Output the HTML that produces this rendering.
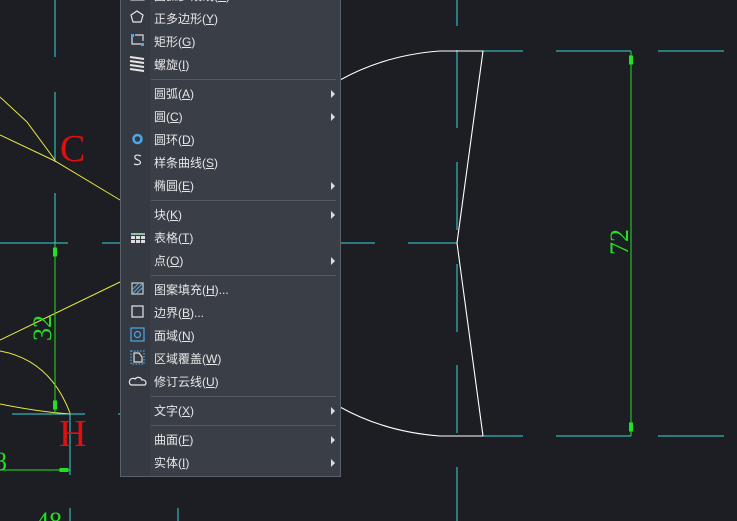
<!DOCTYPE html>
<html><head><meta charset="utf-8"><style>
body{margin:0;width:737px;height:521px;background:#1c1e23;overflow:hidden;position:relative;font-family:"Liberation Sans","Noto Sans CJK SC",sans-serif}
svg.bg{position:absolute;left:0;top:0}
.menu{position:absolute;left:120px;top:-8px;width:219px;height:484px;background:#3a3f47;border:1px solid #5c6068;border-top:none}
.menu .ic{position:absolute;left:0;top:0;width:29px;height:100%;background:#353a42}
.it{position:absolute;left:33px;height:22px;line-height:22px;font-size:12px;color:#e6e6e6;white-space:nowrap}
.ar{position:absolute;right:5px;width:0;height:0;border-left:4px solid #ddd;border-top:4px solid transparent;border-bottom:4px solid transparent}
.sep{position:absolute;left:30px;right:4px;height:1px;background:#555a62}
.u{text-decoration:underline}
</style></head><body>
<svg class="bg" width="737" height="521">
<g stroke="#3ad8d8" stroke-width="1" fill="none">
<line x1="55" y1="0" x2="55" y2="57"/><line x1="55" y1="92" x2="55" y2="162"/><line x1="55" y1="193" x2="55" y2="243"/>
<line x1="0" y1="243" x2="68" y2="243"/><line x1="102" y1="243" x2="120" y2="243"/>
<line x1="12" y1="414" x2="85" y2="414"/><line x1="118" y1="414" x2="122" y2="414"/>
<line x1="70" y1="413" x2="70" y2="475"/><line x1="70" y1="508" x2="70" y2="521"/><line x1="178" y1="508" x2="178" y2="521"/>
<line x1="457" y1="0" x2="457" y2="26"/><line x1="457" y1="50" x2="457" y2="128"/><line x1="457" y1="162" x2="457" y2="230"/><line x1="457" y1="264" x2="457" y2="332"/><line x1="457" y1="365" x2="457" y2="433"/><line x1="457" y1="467" x2="457" y2="521"/>
<line x1="457" y1="51" x2="523" y2="51"/><line x1="556" y1="51" x2="631" y2="51"/><line x1="658" y1="51" x2="724" y2="51"/>
<line x1="457" y1="436" x2="523" y2="436"/><line x1="556" y1="436" x2="631" y2="436"/><line x1="658" y1="436" x2="724" y2="436"/>
<line x1="340" y1="243" x2="375" y2="243"/><line x1="408" y1="243" x2="457" y2="243"/>
</g>
<g stroke="#ffffff" stroke-width="1.1" fill="none">
<path d="M340 80 Q385 55 440 51 L483 51 L457 243 L483 436 L440 436 Q385 432 340 407"/>
</g>
<g stroke="#e8e840" stroke-width="1" fill="none">
<path d="M0 97 L27 122 L55 160"/><path d="M0 135 L55 161 L120 200"/>
<path d="M0 340 L120 282"/><path d="M0 351 Q50 360 70 413"/><path d="M0 404 Q40 412 70 414"/>
</g>
<g stroke="#22e022" stroke-width="1" fill="#22e022">
<line x1="631" y1="51" x2="631" y2="436"/><path d="M629.5 56 h3 v8 h-3z"/><path d="M629.5 423 h3 v8 h-3z"/>
<line x1="55" y1="243" x2="55" y2="414"/><path d="M53.5 248 h3 v8 h-3z"/><path d="M53.5 401 h3 v8 h-3z"/>
<line x1="0" y1="470" x2="70" y2="470"/><path d="M60 468.5 h8 v3 h-8z"/>
</g>
<g fill="#22e022" font-family="Liberation Serif,serif" font-size="26" stroke="none">
<text transform="translate(628,242) rotate(-90)" text-anchor="middle">72</text>
<text transform="translate(51,328) rotate(-90)" text-anchor="middle">32</text>
<text x="-6" y="470">8</text>
<text x="36" y="530">48</text>
</g>
<g fill="#e01010" font-family="Liberation Serif,serif" font-size="38">
<text x="60" y="161">C</text><text x="59" y="446">H</text>
</g>
</svg>
<div class="menu"><div class="ic"></div>
<svg style="position:absolute;left:0;top:0" width="29" height="484" fill="none" stroke="#e6e6e6" stroke-width="1.2">
<path d="M10 5 h13 v3 h-13z" stroke="#ccc"/>
<path d="M16 19 l6 4 -2 7 h-8 l-2 -7z"/>
<path d="M11 43 v9 h10 M14 43 h8 v6" stroke="#ddd"/><rect x="10" y="42" width="3" height="3" fill="#4aa8e8" stroke="none"/><rect x="20" y="51" width="3" height="3" fill="#4aa8e8" stroke="none"/>
<path d="M9 65 l14 2 M9 69 l14 2 M9 73 l14 2 M9 77 l14 2" stroke-width="2"/>
<circle cx="16.5" cy="147" r="4" stroke="#4aa8e8" stroke-width="2.5"/>
<path d="M20 164 c-6 -3 -9 2 -3 4 c5 2 2 6 -4 4"/>
<g fill="#ddd" stroke="none"><rect x="10" y="241" width="14" height="2" fill="#8ac4a0"/><rect x="10" y="244" width="4" height="3"/><rect x="15" y="244" width="4" height="3"/><rect x="20" y="244" width="4" height="3"/><rect x="10" y="248" width="4" height="3"/><rect x="15" y="248" width="4" height="3"/><rect x="20" y="248" width="4" height="3"/></g>
<rect x="11" y="291" width="11" height="11" stroke="#ccc"/><path d="M12 301 l9 -9 M12 297 l5 -5 M16 301 l5 -5" stroke="#4aa8e8"/>
<rect x="11" y="314" width="11" height="11"/>
<rect x="10" y="336" width="13" height="13" stroke="#4aa8e8"/><circle cx="16.5" cy="342.5" r="3" stroke="#4aa8e8"/>
<rect x="10" y="359" width="13" height="13" stroke="#4aa8e8" stroke-dasharray="1.5 1.5"/><path d="M13 361 h5 l3 4 v5 h-8z" stroke="#ddd"/>
<path d="M10 393 h14 a3 3 0 0 0 -3 -5 a4 4 0 0 0 -7 -1 a3 3 0 0 0 -4 6z"/>
</svg>
<div class="it" style="top:-7px">圆弧多段线(<span class="u">P</span>)</div>
<div class="it" style="top:16px">正多边形(<span class="u">Y</span>)</div>
<div class="it" style="top:39px">矩形(<span class="u">G</span>)</div>
<div class="it" style="top:62px">螺旋(<span class="u">I</span>)</div>
<div class="sep" style="top:87px"></div>
<div class="it" style="top:91px">圆弧(<span class="u">A</span>)</div><div class="ar" style="top:98px"></div>
<div class="it" style="top:114px">圆(<span class="u">C</span>)</div><div class="ar" style="top:121px"></div>
<div class="it" style="top:137px">圆环(<span class="u">D</span>)</div>
<div class="it" style="top:160px">样条曲线(<span class="u">S</span>)</div>
<div class="it" style="top:183px">椭圆(<span class="u">E</span>)</div><div class="ar" style="top:190px"></div>
<div class="sep" style="top:208px"></div>
<div class="it" style="top:212px">块(<span class="u">K</span>)</div><div class="ar" style="top:219px"></div>
<div class="it" style="top:235px">表格(<span class="u">T</span>)</div>
<div class="it" style="top:258px">点(<span class="u">O</span>)</div><div class="ar" style="top:265px"></div>
<div class="sep" style="top:283px"></div>
<div class="it" style="top:287px">图案填充(<span class="u">H</span>)...</div>
<div class="it" style="top:310px">边界(<span class="u">B</span>)...</div>
<div class="it" style="top:333px">面域(<span class="u">N</span>)</div>
<div class="it" style="top:356px">区域覆盖(<span class="u">W</span>)</div>
<div class="it" style="top:379px">修订云线(<span class="u">U</span>)</div>
<div class="sep" style="top:404px"></div>
<div class="it" style="top:408px">文字(<span class="u">X</span>)</div><div class="ar" style="top:415px"></div>
<div class="sep" style="top:433px"></div>
<div class="it" style="top:437px">曲面(<span class="u">F</span>)</div><div class="ar" style="top:444px"></div>
<div class="it" style="top:460px">实体(<span class="u">I</span>)</div><div class="ar" style="top:467px"></div>
</div>
</body></html>
